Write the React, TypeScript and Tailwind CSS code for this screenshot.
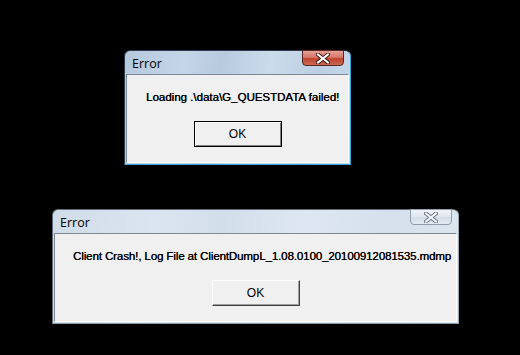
import React from 'react';

interface ErrorDialogProps {
  left: number;
  top: number;
  width: number;
  message: string;
  active?: boolean;
  tight?: boolean;
}

const CloseGlyph = ({ active }: { active: boolean }) => (
  <svg width="14" height="11" viewBox="0 0 14 11">
    <path
      d="M2 1.5 L12 9.5 M12 1.5 L2 9.5"
      stroke={active ? '#3a1a14' : '#6b7785'}
      strokeWidth="4"
      strokeLinecap="square"
    />
    <path
      d="M2 1.5 L12 9.5 M12 1.5 L2 9.5"
      stroke={active ? '#ffffff' : '#f4f6f9'}
      strokeWidth="2"
      strokeLinecap="square"
    />
  </svg>
);

const ErrorDialog: React.FC<ErrorDialogProps> = ({ left, top, width, message, active = false, tight = false }) => {
  return (
    <div
      className={
        'absolute flex flex-col h-[115px] rounded-t-[6px] border px-px pb-px ' +
        (active
          ? 'border-[#2b3a4c] border-r-[#3aa6da] border-b-[#3aa6da] bg-[linear-gradient(100deg,#b5c9de_0%,#c4d5e7_25%,#b7cbe0_40%,#cbdbea_60%,#bcd0e4_80%,#c8d8e9_100%)]'
          : 'border-[#5d6b7a] border-r-[#9aa8b6] border-b-[#8e9aa7] bg-[linear-gradient(100deg,#d0dce9_0%,#dbe5f0_25%,#d2deea_40%,#dee7f1_60%,#d5e0ec_80%,#dce6f0_100%)]')
      }
      style={{ left, top, width }}
    >
      {/* Title bar */}
      <div className="relative h-[23px] flex items-center pl-[6px] shrink-0">
        <span className="text-[12.5px] text-black leading-none pt-[3px] font-['Open_Sans',sans-serif]">
          Error
        </span>
        <div
          className={
            'absolute top-[-1px] right-[5px] w-[42px] h-[16px] rounded-b-[4px] border flex items-center justify-center ' +
            (active
              ? 'border-[#5b2620] bg-[linear-gradient(180deg,#e6a294_0%,#d6786a_45%,#bf4230_55%,#cc6a52_100%)]'
              : 'border-[#8f9cab] bg-[linear-gradient(180deg,#eef3f8_0%,#dde6ef_50%,#d2dce7_55%,#e2e9f1_100%)]')
          }
        >
          <CloseGlyph active={active} />
        </div>
      </div>

      {/* Client area */}
      <div className="flex-1 flex flex-col bg-[#f0f0f0] border border-[#7b8896] border-r-white border-b-white">
        <div
          className={
            'pt-[14px] h-[32px] text-[11.5px] text-black whitespace-nowrap font-["Liberation_Sans",sans-serif] [text-shadow:0.25px_0_0_#000] ' +
            (tight ? 'pl-[18px] tracking-[-0.1px]' : 'pl-[19px]')
          }
        >
          {message}
        </div>
        <div className="flex justify-center mt-[14px]">
          <div
            className={
              'w-[88px] h-[26px] flex items-center justify-center text-[12px] text-black bg-[#f0f0f0] font-["Liberation_Sans",sans-serif] ' +
              (active
                ? 'border border-black shadow-[inset_1px_1px_0_#ffffff,inset_-1px_-1px_0_#808080]'
                : 'border border-t-white border-l-white border-r-[#404040] border-b-[#404040] shadow-[inset_-1px_-1px_0_#a0a0a0]')
            }
          >
            OK
          </div>
        </div>
      </div>
    </div>
  );
};

export default function App() {
  return (
    <div className="relative w-[520px] h-[355px] bg-black overflow-hidden">
      <ErrorDialog
        left={124}
        top={50}
        width={227}
        active
        message={'Loading .\\data\\G_QUESTDATA failed!'}
      />
      <ErrorDialog
        left={52}
        top={209}
        width={407}
        tight
        message="Client Crash!, Log File at ClientDumpL_1.08.0100_20100912081535.mdmp"
      />
    </div>
  );
}
